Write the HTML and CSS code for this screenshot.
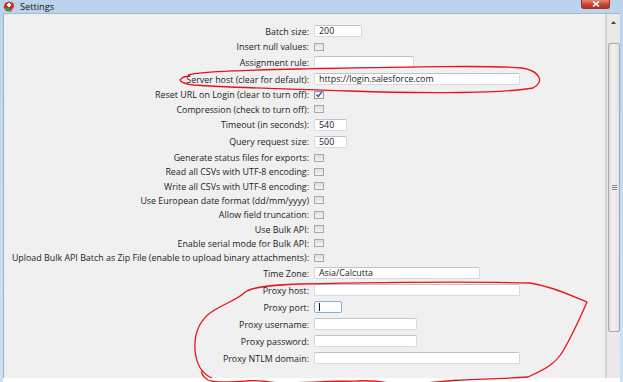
FILE: index.html
```html
<!DOCTYPE html>
<html>
<head>
<meta charset="utf-8">
<link rel="stylesheet" href="styles.css">
</head>
<body>
<div class="window">
  <div class="titlebar">
    <svg class="appicon" width="12" height="11" viewBox="0 0 12 11">
      <path d="M2 2 L6 0.5 L10.5 2 L11 6 L8 10 L3 10 L0.5 6 Z" fill="#d0302c"/>
      <path d="M1 7 L4 10.5 L9 10.5 L6 7 Z" fill="#3a9a3a"/>
      <path d="M4 3 L8 3 L8 5 L4 5 Z" fill="#fff"/>
      <path d="M5 2 L7 2 L7 6 L5 6 Z" fill="#fff"/>
    </svg>
    <span class="title">Settings</span>
    <div class="close">
      <svg width="8" height="6" viewBox="0 0 8 6"><path d="M1 0.5 L7 5.5 M7 0.5 L1 5.5" stroke="#fff" stroke-width="1.6"/></svg>
    </div>
  </div>
  <div class="client">
    <div class="panel">
      <div class="row tall"><div class="lbl">Batch size:</div><div class="fld w47">200</div></div>
      <div class="row short"><div class="lbl">Insert null values:</div><div class="cb"></div></div>
      <div class="row tall"><div class="lbl">Assignment rule:</div><div class="fld w99"></div></div>
      <div class="row tall"><div class="lbl">Server host (clear for default):</div><div class="fld w205">https://login.salesforce.com</div></div>
      <div class="row short"><div class="lbl">Reset URL on Login (clear to turn off):</div><div class="cb checked"><svg width="8" height="7" viewBox="0 0 8 7"><path d="M1.5 3.8 L3.2 5.6 L6.8 0.8" fill="none" stroke="#2b4f8f" stroke-width="1.3"/></svg></div></div>
      <div class="row short"><div class="lbl">Compression (check to turn off):</div><div class="cb"></div></div>
      <div class="row tall"><div class="lbl">Timeout (in seconds):</div><div class="fld w32">540</div></div>
      <div class="row tall"><div class="lbl">Query request size:</div><div class="fld w32">500</div></div>
      <div class="row short"><div class="lbl">Generate status files for exports:</div><div class="cb"></div></div>
      <div class="row short"><div class="lbl">Read all CSVs with UTF-8 encoding:</div><div class="cb"></div></div>
      <div class="row short"><div class="lbl">Write all CSVs with UTF-8 encoding:</div><div class="cb"></div></div>
      <div class="row short"><div class="lbl">Use European date format (dd/mm/yyyy)</div><div class="cb"></div></div>
      <div class="row short"><div class="lbl">Allow field truncation:</div><div class="cb"></div></div>
      <div class="row short"><div class="lbl">Use Bulk API:</div><div class="cb"></div></div>
      <div class="row short"><div class="lbl">Enable serial mode for Bulk API:</div><div class="cb"></div></div>
      <div class="row short"><div class="lbl">Upload Bulk API Batch as Zip File (enable to upload binary attachments):</div><div class="cb"></div></div>
      <div class="row tall"><div class="lbl">Time Zone:</div><div class="fld w165">Asia/Calcutta</div></div>
      <div class="row tall"><div class="lbl">Proxy host:</div><div class="fld w205"></div></div>
      <div class="row tall"><div class="lbl">Proxy port:</div><div class="fld w28 focus"><span class="caret"></span></div></div>
      <div class="row tall"><div class="lbl">Proxy username:</div><div class="fld w102"></div></div>
      <div class="row tall"><div class="lbl">Proxy password:</div><div class="fld w102"></div></div>
      <div class="row tall"><div class="lbl">Proxy NTLM domain:</div><div class="fld w205"></div></div>
    </div>
    <div class="scrollbar">
      <div class="sb-btn"><svg width="5" height="3" viewBox="0 0 5 3"><path d="M0 3 L2.5 0 L5 3 Z" fill="#444"/></svg></div>
      <div class="sb-track">
        <div class="thumb"><span class="grip"></span></div>
      </div>
    </div>
  </div>
  <div class="bottom"></div>
  <svg class="annot" width="623" height="382" viewBox="0 0 623 382">
    <path d="M188 75 C 205 71, 250 70, 300 69 C 400 67, 490 65, 522 68 C 540 71, 545 82, 533 88 C 505 93, 430 94, 350 91 C 280 89, 220 87, 194 85 C 184 84, 178 81, 181 79 C 183 77, 186 76, 190 76" fill="none" stroke="#e8141b" stroke-width="1.3"/>
    <path d="M212 378 C 200 373, 196 362, 195 350 C 194 334, 199 320, 213 311 C 226 303, 238 299, 244 293 C 250 287, 270 285, 300 284 C 400 282, 490 282, 530 283 C 555 287, 572 296, 587 302 C 580 318, 572 336, 563 351 C 556 363, 546 369, 528 377 C 500 379, 475 379, 462 380 C 440 381, 420 384, 400 385 C 385 382, 370 380, 357 381 C 330 381, 300 383, 278 383 C 265 381, 255 380, 246 381 C 230 382, 215 383, 208 380 C 203 377, 201 373, 202 371" fill="none" stroke="#e8141b" stroke-width="1.3"/>
  </svg>
</div>
</body>
</html>
```
FILE: styles.css
```css
html, body {
  margin: 0;
  padding: 0;
  background: #ffffff;
}
.window {
  position: relative;
  width: 623px;
  height: 382px;
  overflow: hidden;
  background: linear-gradient(#bcd3ee, #cfe0f4);
  font-family: "Open Sans", "Liberation Sans", sans-serif;
  font-size: 8.9px;
  color: #1c1c1c;
  display: flex;
  flex-direction: column;
}
.titlebar {
  height: 13px;
  display: flex;
  align-items: center;
  padding-left: 3px;
  flex: none;
}
.appicon { display: block; }
.title {
  margin-left: 5px;
  font-size: 9.2px;
  color: #111;
  margin-top: -1px;
}
.close {
  margin-left: auto;
  margin-right: 13px;
  align-self: flex-start;
  width: 27px;
  height: 8px;
  background: linear-gradient(#e08a7c, #c84130 60%, #b5301f);
  border: 1px solid #8a3a30;
  border-top: none;
  border-radius: 0 0 3px 3px;
  display: flex;
  align-items: center;
  justify-content: center;
}
.close svg { display: block; }
.client {
  flex: 1;
  display: flex;
  margin-left: 3px;
  margin-right: 3px;
  border-left: 1px solid #9fb0c4;
  border-top: 1px solid #a9b9cc;
  background: #f0f0f0;
  min-height: 0;
}
.panel {
  flex: 1;
  padding-top: 8.5px;
  border-right: 1px solid #d6d6d6;
}
.row {
  display: flex;
  align-items: center;
  gap: 5px;
}
.row.tall { height: 17px; }
.row.short { height: 14.3px; }
.lbl {
  width: 305px;
  text-align: right;
  white-space: nowrap;
  flex: none;
}
.fld {
  height: 12px;
  box-sizing: border-box;
  background: #fff;
  border: 1px solid #d6d9de;
  border-top-color: #bfc3c8;
  border-radius: 2px;
  padding-left: 4px;
  line-height: 10px;
  color: #1a1a1a;
  display: flex;
  align-items: center;
}
.fld.focus { border-color: #7eaee0; }
.caret {
  display: block;
  width: 1px;
  height: 8px;
  background: #111;
}
.w28 { width: 28px; }
.w32 { width: 33px; }
.w47 { width: 48px; }
.w99 { width: 100px; }
.w102 { width: 103px; }
.w165 { width: 166px; }
.w205 { width: 206px; }
.cb {
  width: 10px;
  height: 8px;
  box-sizing: border-box;
  border: 1px solid #a7a7a7;
  background: linear-gradient(#dedede, #f4f4f4);
  display: flex;
  align-items: center;
  justify-content: center;
}
.cb.checked { background: linear-gradient(#e2e8f2, #f6f8fb); border-color: #8d99ad; }
.cb svg { display: block; }
.scrollbar {
  width: 13px;
  flex: none;
  display: flex;
  flex-direction: column;
  background: #e9e9e9;
  border-left: 1px solid #d0d0d0;
}
.sb-btn {
  height: 13px;
  display: flex;
  align-items: center;
  justify-content: center;
  padding-top: 2px;
}
.sb-btn svg { display: block; }
.sb-track {
  flex: 1;
  padding-top: 14px;
  padding-bottom: 46px;
  display: flex;
  flex-direction: column;
}
.thumb {
  flex: 1;
  margin-left: 1px;
  border: 1px solid #a8a8a8;
  border-radius: 2px;
  background: linear-gradient(90deg, #dcdcdc, #f2f2f2 40%, #e3e3e3);
  display: flex;
  align-items: center;
  justify-content: center;
}
.grip {
  width: 5px;
  height: 5px;
  background: repeating-linear-gradient(#8a8a8a 0 1px, #e8e8e8 1px 2px);
}
.bottom {
  height: 4px;
  flex: none;
  margin-left: 3px;
  margin-right: 3px;
  background: #ffffff;
}
.annot {
  position: absolute;
  left: 0;
  top: 0;
  pointer-events: none;
}
```
